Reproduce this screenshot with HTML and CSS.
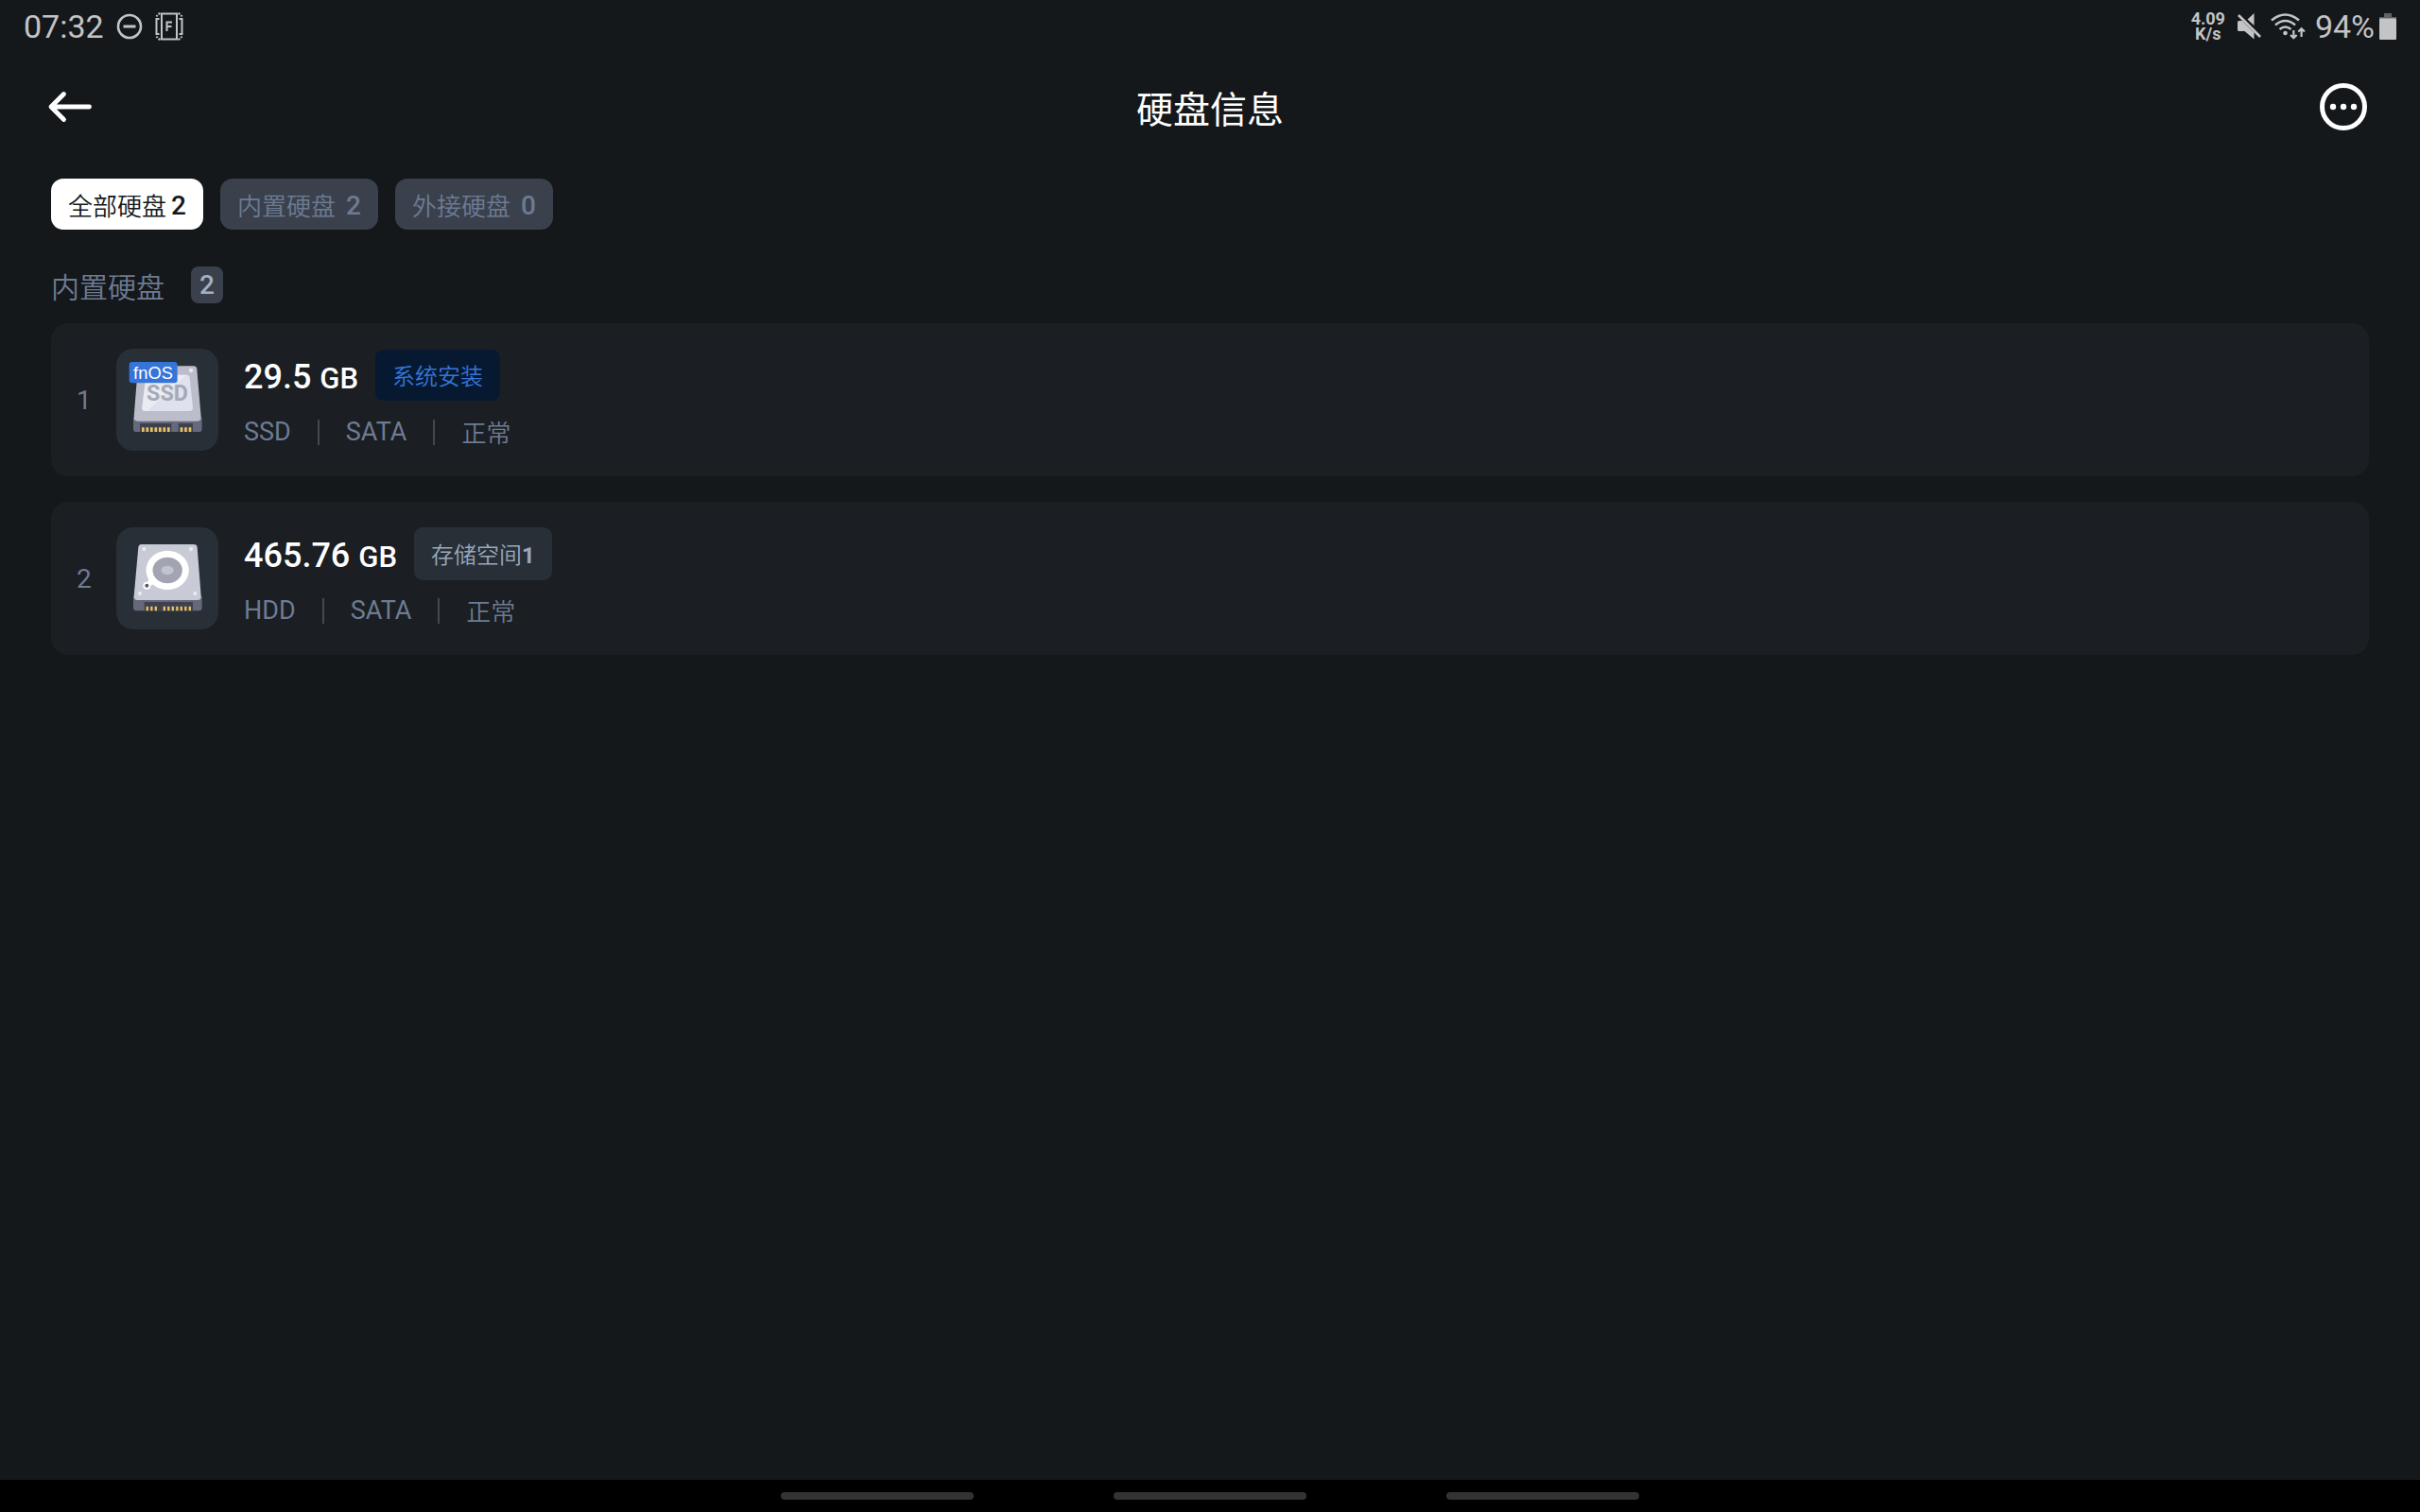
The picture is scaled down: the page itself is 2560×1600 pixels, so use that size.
FILE: index.html
```html
<!DOCTYPE html>
<html lang="zh-CN">
<head>
<meta charset="utf-8">
<meta name="viewport" content="width=device-width, initial-scale=1">
<title>硬盘信息</title>
<link rel="stylesheet" href="styles.css">
</head>
<body>
<div class="status-bar">
  <div class="status-group">
    <span class="status-text">07:32</span>
    <svg class="icon-dnd" viewBox="0 0 28 28" aria-hidden="true">
      <circle cx="14" cy="14" r="12" fill="none" stroke="currentColor" stroke-width="2.6"/>
      <path d="M7.500 14H20.500" stroke="currentColor" stroke-width="3"/>
    </svg>
    <svg class="icon-frame" viewBox="0 0 30 30" aria-hidden="true">
      <g fill="none" stroke="currentColor" stroke-width="2">
        <rect x="7" y="1.500" width="16" height="27"/>
        <path d="M4.500 7H1.500V23H4.500M25.500 7H28.500V23H25.500"/>
        <path d="M1.500 4.500L2.500 3M3.500 2L5.500 1M28.500 4.500L27.500 3M26.500 2L24.500 1M1.500 25.500L2.500 27M3.500 28L5.500 29M28.500 25.500L27.500 27M26.500 28L24.500 29"/>
        <path d="M12.500 20V10.500H18M12.500 15H17.500"/>
      </g>
    </svg>
  </div>
  <div class="status-group status-right">
    <span class="net-speed">4.09<br>K/s</span>
    <svg class="icon-mute" viewBox="0 0 26 28" aria-hidden="true">
      <path fill="currentColor" d="M1 9.500Q1 8 2.500 8H6L18.500 20.500V27.500L8.500 19H2.500Q1 19 1 17.500ZM18.500 0V13L11.500 6.500Z"/>
      <path d="M2 2L25 25" stroke="currentColor" stroke-width="2.600"/>
    </svg>
    <svg class="icon-wifi" viewBox="0 0 37 28" aria-hidden="true">
      <g fill="none" stroke="currentColor" stroke-width="2.600">
        <path d="M1 7.500Q15.500 -4.500 30 7.500M5 12.500Q15.500 3.500 26 12.500M9.500 17Q15.500 12 21.500 17"/>
      </g>
      <circle cx="15.500" cy="21" r="2.300" fill="currentColor"/>
      <path fill="none" stroke="currentColor" stroke-width="2.200" d="M24.300 18V26M21 23L24.300 26.300L27.600 23M32.600 25V16.500M29.300 19.500L32.600 16.200L35.900 19.500"/>
    </svg>
    <span class="status-text">94%</span>
    <svg class="icon-battery" viewBox="0 0 18 28" aria-hidden="true">
      <rect x="5" y="0" width="8" height="4" fill="#606264"/>
      <rect x="0" y="4" width="18" height="2" fill="#606264"/>
      <rect x="0" y="5.500" width="18" height="22.500" rx="1" fill="currentColor"/>
    </svg>
  </div>
</div>

<header class="app-header">
  <button class="icon-button back-button" type="button" aria-label="返回">
    <svg class="icon-back" viewBox="0 0 50 50" fill="none" stroke="currentColor" stroke-width="4.800" stroke-linecap="round" stroke-linejoin="round" aria-hidden="true">
      <path d="M44.500 25H4M17.500 11.500L4 25L17.500 38.500"/>
    </svg>
  </button>
  <h1 class="page-title">硬盘信息</h1>
  <button class="icon-button more-button" type="button" aria-label="更多">
    <svg class="icon-more" viewBox="0 0 50 50" aria-hidden="true">
      <circle cx="25" cy="25" r="22.500" fill="none" stroke="currentColor" stroke-width="5"/>
      <g fill="currentColor"><circle cx="14" cy="25" r="3.200"/><circle cx="25" cy="25" r="3.200"/><circle cx="36" cy="25" r="3.200"/></g>
    </svg>
  </button>
</header>

<main class="content">
  <nav class="filters" aria-label="硬盘筛选">
    <button class="chip chip-active" type="button"><span class="chip-label">全部硬盘</span><span class="count">2</span></button>
    <button class="chip" type="button"><span class="chip-label">内置硬盘</span><span class="count">2</span></button>
    <button class="chip" type="button"><span class="chip-label">外接硬盘</span><span class="count">0</span></button>
  </nav>

  <section>
    <div class="section-head">
      <h2 class="section-title">内置硬盘</h2>
      <span class="section-count">2</span>
    </div>
    <ul class="disk-list">
      <li class="disk-card">
        <span class="disk-index">1</span>
        <span class="disk-thumb">
          <svg class="disk-art" viewBox="40 42 324 324" role="img" aria-label="fnOS SSD">
            <path fill="#66687b" d="M94 262H312V296Q312 306 302 306H104Q94 306 94 296Z"/>
            <path fill="#3e414d" d="M115 279H215V306H115ZM237 279H283V306H237Z"/>
            <path fill="#e9c160" d="M121 292h8v14h-8zM134.500 292h8v14h-8zM148 292h8v14h-8zM161.500 292h8v14h-8zM175 292h8v14h-8zM188.500 292h8v14h-8zM202 292h8v14h-8zM243 292h8v14h-8zM256.500 292h8v14h-8zM270 292h8v14h-8z"/>
            <path fill="#bbbdca" d="M118 97H285Q295 97 296 107L309 259Q310 272 298 272H107Q95 272 96 259L108 107Q109 97 118 97Z"/>
            <path fill="#dfe2ed" d="M143 125H264Q272 125 273 133L283 229Q284 240 273 240H132Q121 240 122 229L134 133Q135 125 143 125Z"/>
            <path fill="#e9ecf3" d="M143 125H262L138 240H132Q121 240 122 229L134 133Q135 125 143 125Z"/>
            <text class="art-ssd" x="202" y="206">SSD</text>
            <circle cx="277" cy="111" r="6.500" fill="#e8eaf1"/>
            <rect x="81" y="84" width="153" height="67" rx="9" fill="#3575d9"/>
            <text class="art-os" x="157" y="137">fnOS</text>
          </svg>
        </span>
        <div class="disk-info">
          <div class="disk-main">
            <strong class="disk-size">29.5 <span class="disk-unit">GB</span></strong>
            <span class="tag tag-system">系统安装</span>
          </div>
          <div class="disk-meta"><span>SSD</span><i class="divider"></i><span>SATA</span><i class="divider"></i><span class="disk-state">正常</span></div>
        </div>
      </li>
      <li class="disk-card">
        <span class="disk-index">2</span>
        <span class="disk-thumb">
          <svg class="disk-art" viewBox="40 54 324 324" role="img" aria-label="HDD">
            <path fill="#66687b" d="M94 274H312V309Q312 319 302 319H104Q94 319 94 309Z"/>
            <path fill="#3e414d" d="M129 291H283V319H129Z"/>
            <path fill="#e9c160" d="M135 305h7v14h-7zM148.500 305h7v14h-7zM162 305h7v14h-7zM189 305h7v14h-7zM202.500 305h7v14h-7zM216 305h7v14h-7zM229.500 305h7v14h-7zM243 305h7v14h-7zM256.500 305h7v14h-7zM270 305h7v14h-7z"/>
            <path fill="#c8cad5" d="M120 108H286Q296 108 297 118L309 272Q310 285 298 285H107Q95 285 96 272L110 118Q111 108 120 108Z"/>
            <g fill="#e8eaf1"><circle cx="128" cy="123" r="6.500"/><circle cx="277" cy="123" r="6.500"/><circle cx="115" cy="264" r="6.500"/><circle cx="290" cy="264" r="6.500"/></g>
            <path fill="#fff" d="M143 215L168 236Q154 232 149 241L128 232Q142 232 143 215Z"/>
            <ellipse cx="202.500" cy="190" rx="68" ry="62" fill="#fff"/>
            <ellipse cx="202.500" cy="190.500" rx="47" ry="41" fill="#a2a5b1"/>
            <ellipse cx="202.500" cy="190.500" rx="20" ry="14" fill="#c1c4cf"/>
            <circle cx="137" cy="239" r="12" fill="#fff"/>
            <circle cx="137" cy="239" r="6" fill="#555969"/>
          </svg>
        </span>
        <div class="disk-info">
          <div class="disk-main">
            <strong class="disk-size">465.76 <span class="disk-unit">GB</span></strong>
            <span class="tag">存储空间<b class="tag-number">1</b></span>
          </div>
          <div class="disk-meta"><span>HDD</span><i class="divider"></i><span>SATA</span><i class="divider"></i><span class="disk-state">正常</span></div>
        </div>
      </li>
    </ul>
  </section>
</main>

<footer class="gesture-bar">
  <button class="gesture" type="button" aria-label="最近任务"></button>
  <button class="gesture" type="button" aria-label="主屏幕"></button>
  <button class="gesture" type="button" aria-label="返回上一级"></button>
</footer>
</body>
</html>
```
FILE: styles.css
```css
* {
  box-sizing: border-box;
}

body {
  margin: 0;
  min-height: 100vh;
  display: flex;
  flex-direction: column;
  background: #14181b;
  color: #fff;
  font-family: Roboto, "Noto Sans CJK SC", sans-serif;
  font-size: 28px;
}

button {
  border: 0;
  padding: 0;
  background: none;
  color: inherit;
  font: inherit;
}

svg {
  display: block;
}

/* System status bar */
.status-bar {
  height: 56px;
  padding: 0 25px;
  display: flex;
  justify-content: space-between;
  align-items: center;
  color: #c3c4c5;
}

.status-group {
  display: flex;
  align-items: center;
  gap: 13px;
}

.status-right {
  gap: 10px;
}

.status-text {
  font-size: 34px;
  line-height: 56px;
}

.net-speed {
  margin-right: 2px;
  font-size: 18px;
  font-weight: 700;
  line-height: 16px;
  text-align: center;
}

.icon-dnd {
  width: 28px;
  height: 28px;
}

.icon-frame {
  width: 30px;
  height: 30px;
}

.icon-mute {
  width: 26px;
  height: 28px;
}

.icon-wifi {
  width: 37px;
  height: 28px;
}

.icon-battery {
  width: 18px;
  height: 28px;
  margin-left: -5px;
}

/* Title bar */
.app-header {
  height: 114px;
  padding: 0 56px 0 50px;
  display: grid;
  grid-template-columns: 1fr auto 1fr;
  align-items: center;
}

.icon-button,
.icon-back,
.icon-more {
  width: 50px;
  height: 50px;
}

.more-button {
  justify-self: end;
}

.page-title {
  margin: 0;
  padding: 8px 0 0 6px;
  font-size: 39px;
  font-weight: 400;
  line-height: 56px;
}

/* Page body */
.content {
  flex: 1;
  padding: 19px 54px;
}

.filters {
  display: flex;
  gap: 18px;
}

.chip {
  height: 54px;
  padding: 0 18px;
  display: flex;
  align-items: center;
  gap: 11px;
  border-radius: 13px;
  background: #3a414c;
  color: #6d7b93;
}

.chip-active {
  gap: 5px;
  background: #fff;
  color: #14181b;
}

.chip-label {
  padding-top: 6px;
  font-size: 26px;
  font-weight: 350;
  line-height: 48px;
}

.count,
.section-count {
  font-size: 28px;
  font-weight: 500;
}

.count {
  padding-top: 2px;
}

.section-head {
  margin: 39px 0 21px;
  display: flex;
  align-items: center;
  gap: 28px;
}

.section-title {
  margin: 0;
  padding-top: 6px;
  font-size: 30px;
  font-weight: 350;
  line-height: 33px;
  color: #6d7b93;
}

.section-count {
  min-width: 34px;
  border-radius: 8px;
  background: #3a414c;
  color: #a3afc2;
  line-height: 39px;
  text-align: center;
}

.disk-list {
  margin: 0;
  padding: 0;
  list-style: none;
  display: flex;
  flex-direction: column;
  gap: 27px;
}

.disk-card {
  padding: 27px;
  display: flex;
  align-items: center;
  border-radius: 18px;
  background: #1b1e22;
}

.disk-index {
  width: 42px;
  color: #6d7b93;
}

.disk-thumb {
  width: 108px;
  height: 108px;
  border-radius: 18px;
  background: #282f36;
}

.disk-art {
  width: 108px;
  height: 108px;
}

.art-ssd {
  fill: #a6a9b6;
  font-size: 70px;
  font-weight: 700;
  text-anchor: middle;
}

.art-os {
  fill: #fff;
  font-family: "Liberation Sans", sans-serif;
  font-size: 55px;
  text-anchor: middle;
}

.disk-info {
  padding-left: 27px;
}

.disk-main {
  display: flex;
  align-items: center;
  gap: 18px;
}

.disk-size {
  padding-top: 4px;
  font-size: 36px;
  font-weight: 500;
  line-height: 52px;
}

.disk-unit {
  font-size: 31px;
  line-height: 1;
}

.tag {
  padding: 4px 18px 0;
  border-radius: 9px;
  background: #282f36;
  color: #9ba8bc;
  font-size: 24px;
  font-weight: 350;
  line-height: 52px;
}

.tag-system {
  background: #061931;
  color: #3575d9;
  line-height: 50px;
}

.tag-number {
  font-weight: 700;
  line-height: 1;
}

.disk-meta {
  display: flex;
  align-items: center;
  gap: 28px;
  padding: 14px 0 2px;
  color: #6d7b93;
  font-size: 27px;
  line-height: 36px;
}

.disk-state {
  padding-top: 4px;
  font-size: 26px;
  font-weight: 350;
  line-height: 32px;
}

.divider {
  width: 2px;
  height: 27px;
  background: #45494e;
}

/* System gesture hints */
.gesture-bar {
  height: 34px;
  display: flex;
  align-items: center;
  justify-content: center;
  gap: 148px;
  background: #000;
}

.gesture {
  width: 204px;
  height: 8px;
  border-radius: 4px;
  background: #333;
}
```
